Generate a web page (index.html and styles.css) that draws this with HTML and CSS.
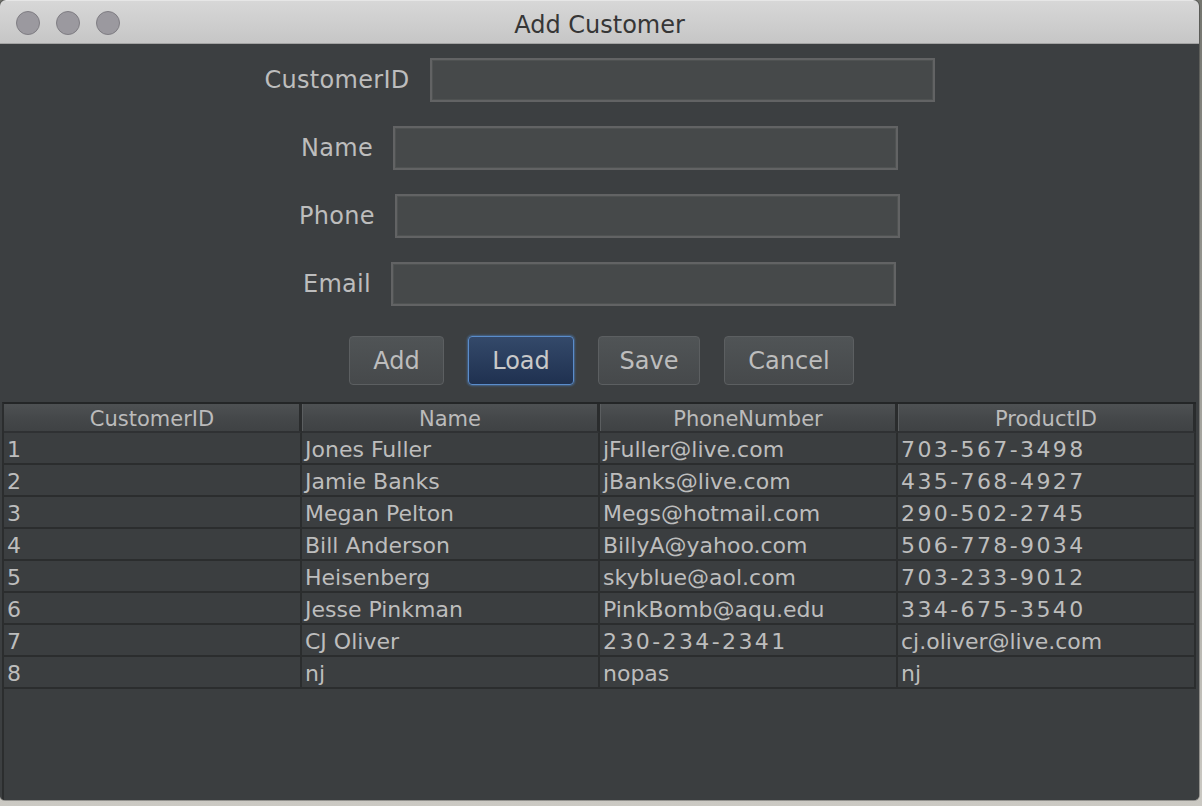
FILE: index.html
```html
<!DOCTYPE html>
<html>
<head>
<meta charset="utf-8">
<title>Add Customer</title>
<link rel="stylesheet" href="styles.css">
</head>
<body>
<div class="window">
  <div class="titlebar">
    <div class="lights">
      <span class="light"></span>
      <span class="light"></span>
      <span class="light"></span>
    </div>
    <div class="title">Add Customer</div>
  </div>
  <div class="content">
    <div class="form">
      <div class="row"><label class="label">CustomerID</label><div class="input"></div></div>
      <div class="row"><label class="label">Name</label><div class="input"></div></div>
      <div class="row"><label class="label">Phone</label><div class="input"></div></div>
      <div class="row"><label class="label">Email</label><div class="input"></div></div>
      <div class="buttons">
        <button class="btn btn-add">Add</button>
        <button class="btn btn-load btn-focus">Load</button>
        <button class="btn btn-save">Save</button>
        <button class="btn btn-cancel">Cancel</button>
      </div>
    </div>
    <div class="table">
      <div class="head">CustomerID</div>
      <div class="head">Name</div>
      <div class="head">PhoneNumber</div>
      <div class="head">ProductID</div>

      <div class="cell">1</div><div class="cell">Jones Fuller</div><div class="cell">jFuller@live.com</div><div class="cell num">703-567-3498</div>
      <div class="cell">2</div><div class="cell">Jamie Banks</div><div class="cell">jBanks@live.com</div><div class="cell num">435-768-4927</div>
      <div class="cell">3</div><div class="cell">Megan Pelton</div><div class="cell">Megs@hotmail.com</div><div class="cell num">290-502-2745</div>
      <div class="cell">4</div><div class="cell">Bill Anderson</div><div class="cell">BillyA@yahoo.com</div><div class="cell num">506-778-9034</div>
      <div class="cell">5</div><div class="cell">Heisenberg</div><div class="cell">skyblue@aol.com</div><div class="cell num">703-233-9012</div>
      <div class="cell">6</div><div class="cell">Jesse Pinkman</div><div class="cell">PinkBomb@aqu.edu</div><div class="cell num">334-675-3540</div>
      <div class="cell">7</div><div class="cell">CJ Oliver</div><div class="cell num">230-234-2341</div><div class="cell">cj.oliver@live.com</div>
      <div class="cell">8</div><div class="cell">nj</div><div class="cell">nopas</div><div class="cell">nj</div>
    </div>
  </div>
</div>
</body>
</html>
```

FILE: styles.css
```css
html, body {
  margin: 0;
  padding: 0;
}

body {
  width: 1202px;
  height: 806px;
  overflow: hidden;
  background: linear-gradient(to bottom, #74756f 0%, #9a9a94 40%, #cbc9c3 100%);
  font-family: "DejaVu Sans", "Liberation Sans", sans-serif;
}

.window {
  width: 1199px;
  height: 800px;
  border-radius: 6px 6px 5px 5px;
  overflow: hidden;
  display: flex;
  flex-direction: column;
  background: #3c3f41;
  box-shadow: 0 0 0 1px rgba(40, 40, 40, 0.35);
}

.titlebar {
  height: 44px;
  flex: none;
  box-sizing: border-box;
  border-bottom: 1px solid #a3a3a3;
  border-top: 1px solid #e6e6e6;
  background: linear-gradient(to bottom, #d7d7d7 0%, #cdcdcd 60%, #c6c6c6 100%);
  display: flex;
  align-items: center;
  justify-content: center;
  position: relative;
}

.lights {
  position: absolute;
  left: 16px;
  top: 10px;
  display: flex;
  gap: 16px;
}

.light {
  width: 22px;
  height: 22px;
  border-radius: 50%;
  background: #9b999f;
  border: 1px solid #7f7d83;
}

.title {
  font-size: 24px;
  color: #363636;
  line-height: 30px;
  margin-top: 5px;
}

.content {
  flex: 1;
  display: flex;
  flex-direction: column;
  background: #3c3f41;
}

.form {
  padding-top: 14px;
  display: flex;
  flex-direction: column;
  gap: 24px;
}

.row {
  display: flex;
  justify-content: center;
  align-items: center;
  gap: 20px;
  height: 44px;
}

.label {
  font-size: 24px;
  color: #bdbdbd;
  letter-spacing: 0.3px;
}

.input {
  width: 505px;
  height: 44px;
  box-sizing: border-box;
  background: #46494a;
  border: 2px solid #626364;
  box-shadow: inset 0 0 0 1px #4f5252;
}

.buttons {
  margin-top: 6px;
  display: flex;
  justify-content: center;
  gap: 24px;
  padding-left: 4px;
}

.btn {
  height: 49px;
  padding: 0;
  box-sizing: border-box;
  font-family: "DejaVu Sans", "Liberation Sans", sans-serif;
  font-size: 24px;
  color: #bdbdbd;
  background: linear-gradient(to bottom, #505456 0%, #46494b 100%);
  border: 1px solid #5c5f61;
  border-radius: 4px;
  text-align: center;
}

.btn-add { width: 95px; }
.btn-load { width: 106px; }
.btn-save { width: 102px; }
.btn-cancel { width: 130px; }

.btn-focus {
  color: #c9c9c9;
  background: linear-gradient(to bottom, #34496a 0%, #1f3150 100%);
  border: 1px solid #5a8ccb;
  box-shadow: 0 0 2px 1px rgba(80, 135, 200, 0.55);
}

.table {
  margin-top: 17px;
  margin-left: 2px;
  width: 1194px;
  flex: 1;
  box-sizing: border-box;
  border-top: 2px solid #242627;
  border-left: 2px solid #2b2d2e;
  display: grid;
  grid-template-columns: repeat(4, 298px);
  grid-auto-rows: 32px;
  grid-template-rows: 29px;
  align-content: start;
  background: #3b3e40;
}

.head {
  box-sizing: border-box;
  height: 29px;
  padding-top: 4px;
  overflow: hidden;
  background: linear-gradient(to bottom, #4e5153 0%, #45484a 50%, #3f4244 100%);
  border-bottom: 2px solid #2f3133;
  border-right: 2px solid #2a2c2d;
  box-shadow: inset -1px 0 0 #2a2c2d, inset 1px 0 0 #5b5e60;
  color: #bbbbbb;
  font-size: 21px;
  line-height: 23px;
  text-align: center;
}

.head:first-child {
  box-shadow: inset -1px 0 0 #2a2c2d;
}

.cell {
  box-sizing: border-box;
  height: 32px;
  border-right: 2px solid #2b2d2e;
  border-bottom: 2px solid #2b2d2e;
  padding-left: 3px;
  padding-top: 3px;
  color: #bdbdbd;
  font-size: 22px;
  line-height: 27px;
  white-space: nowrap;
  overflow: hidden;
}

.num {
  letter-spacing: 2.4px;
}
```
